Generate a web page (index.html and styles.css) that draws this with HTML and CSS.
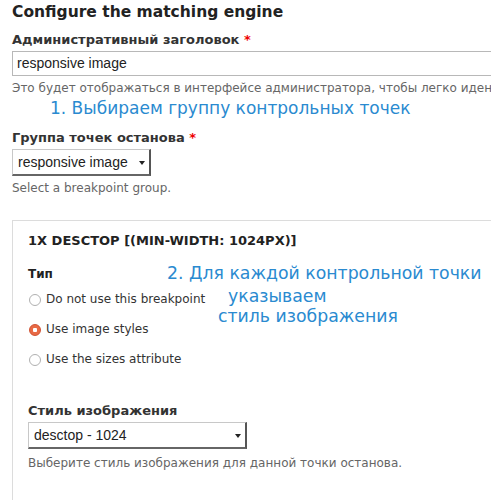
FILE: index.html
```html
<!DOCTYPE html>
<html lang="ru">
<head>
<meta charset="utf-8">
<link rel="stylesheet" href="styles.css">
</head>
<body>
<div class="page">
  <h2 class="title">Configure the matching engine</h2>

  <div class="field">
    <label class="label">Административный заголовок <span class="req">*</span></label>
    <div class="input">responsive image</div>
    <div class="desc">Это будет отображаться в интерфейсе администратора, чтобы легко идентифицировать</div>
  </div>

  <div class="note note1">1. Выбираем группу контрольных точек</div>

  <div class="field field-group">
    <label class="label">Группа точек останова <span class="req">*</span></label>
    <div class="select select-small"><span>responsive image</span><span class="arrow"></span></div>
    <div class="desc desc-tight">Select a breakpoint group.</div>
  </div>

  <div class="card">
    <div class="card-title">1X DESCTOP [(MIN-WIDTH: 1024PX)]</div>
    <div class="type-label">Тип</div>
    <div class="radios">
      <div class="radio-row"><span class="radio"></span>Do not use this breakpoint</div>
      <div class="radio-row"><span class="radio checked"></span>Use image styles</div>
      <div class="radio-row"><span class="radio"></span>Use the sizes attribute</div>
    </div>
    <div class="note note2">
      <div class="n2a">2. Для каждой контрольной точки</div>
      <div class="n2b">указываем</div>
      <div class="n2c">стиль изображения</div>
    </div>
    <div class="style-field">
      <label class="label">Стиль изображения</label>
      <div class="select select-wide"><span>desctop - 1024</span><span class="arrow"></span></div>
      <div class="desc desc-style">Выберите стиль изображения для данной точки останова.</div>
    </div>
  </div>
</div>
</body>
</html>
```
FILE: styles.css
```css
html, body {
  margin: 0;
  padding: 0;
  background: #fff;
  overflow: hidden;
}
.page {
  width: 600px;
  padding: 0 0 0 12px;
  font-family: "DejaVu Sans", sans-serif;
  color: #333;
  white-space: nowrap;
}
.title {
  margin: 0;
  padding-top: 2px;
  font-size: 15.5px;
  font-weight: bold;
  color: #222;
  line-height: 20px;
  height: 20px;
}
.field {
  margin-top: 10px;
}
.label {
  display: block;
  font-size: 13px;
  font-weight: bold;
  color: #333;
  line-height: 16px;
}
.req {
  color: #e00;
}
.input {
  margin-top: 3px;
  height: 25px;
  box-sizing: border-box;
  border: 1px solid #b8b8b8;
  border-right: none;
  padding: 0 4px;
  font-family: "Liberation Sans", Arial, sans-serif;
  font-size: 14px;
  line-height: 23px;
  color: #222;
}
.desc {
  margin-top: 5px;
  font-size: 12px;
  color: #666;
  line-height: 15px;
}
.desc-tight {
  margin-top: 5px;
}
.note {
  color: #2a8ad0;
  font-size: 17px;
  line-height: 20px;
}
.note1 {
  margin-top: 2px;
  padding-left: 38px;
}
.field-group {
  margin-top: 12px;
}
.select {
  margin-top: 3px;
  box-sizing: border-box;
  border: 1px solid #c8c8c8;
  border-right: 2px solid #555;
  border-bottom: 2px solid #666;
  display: flex;
  align-items: center;
  justify-content: space-between;
  padding: 0 4px 0 5px;
  font-family: "Liberation Sans", Arial, sans-serif;
  font-size: 14px;
  color: #222;
  background: #fff;
}
.select-small {
  width: 139px;
  height: 27px;
}
.select-wide {
  width: 219px;
  height: 27px;
  margin-top: 3px;
}
.arrow {
  width: 0;
  height: 0;
  border-left: 3px solid transparent;
  border-right: 3px solid transparent;
  border-top: 4px solid #222;
  margin-top: 2px;
}
.card {
  position: relative;
  margin-top: 24px;
  border: 1px solid #dcdcdc;
  border-right: none;
  padding: 12px 0 40px 15px;
  height: 400px;
}
.card-title {
  font-size: 13px;
  font-weight: bold;
  color: #222;
  line-height: 16px;
}
.type-label {
  margin-top: 18px;
  font-size: 12px;
  font-weight: bold;
  color: #222;
  line-height: 15px;
}
.radios {
  margin-top: 2px;
}
.radio-row {
  display: flex;
  align-items: center;
  height: 30px;
  font-size: 12px;
  color: #333;
}
.radio {
  width: 10px;
  height: 10px;
  border: 1px solid #b0b0b0;
  border-radius: 50%;
  margin: 1px 5px 0 1px;
  box-sizing: content-box;
  background: #fff;
}
.radio.checked {
  border-color: #d05030;
  background: radial-gradient(circle, #fff 0 2px, #e86a45 2.5px);
}
.note2 {
  position: absolute;
  left: 154px;
  top: 42px;
  font-size: 17.3px;
}
.n2a {
  margin-bottom: 3px;
}
.n2b {
  padding-left: 61px;
}
.n2c {
  padding-left: 51px;
}
.style-field {
  margin-top: 29px;
}
.desc-style {
  margin-top: 7px;
}
```
